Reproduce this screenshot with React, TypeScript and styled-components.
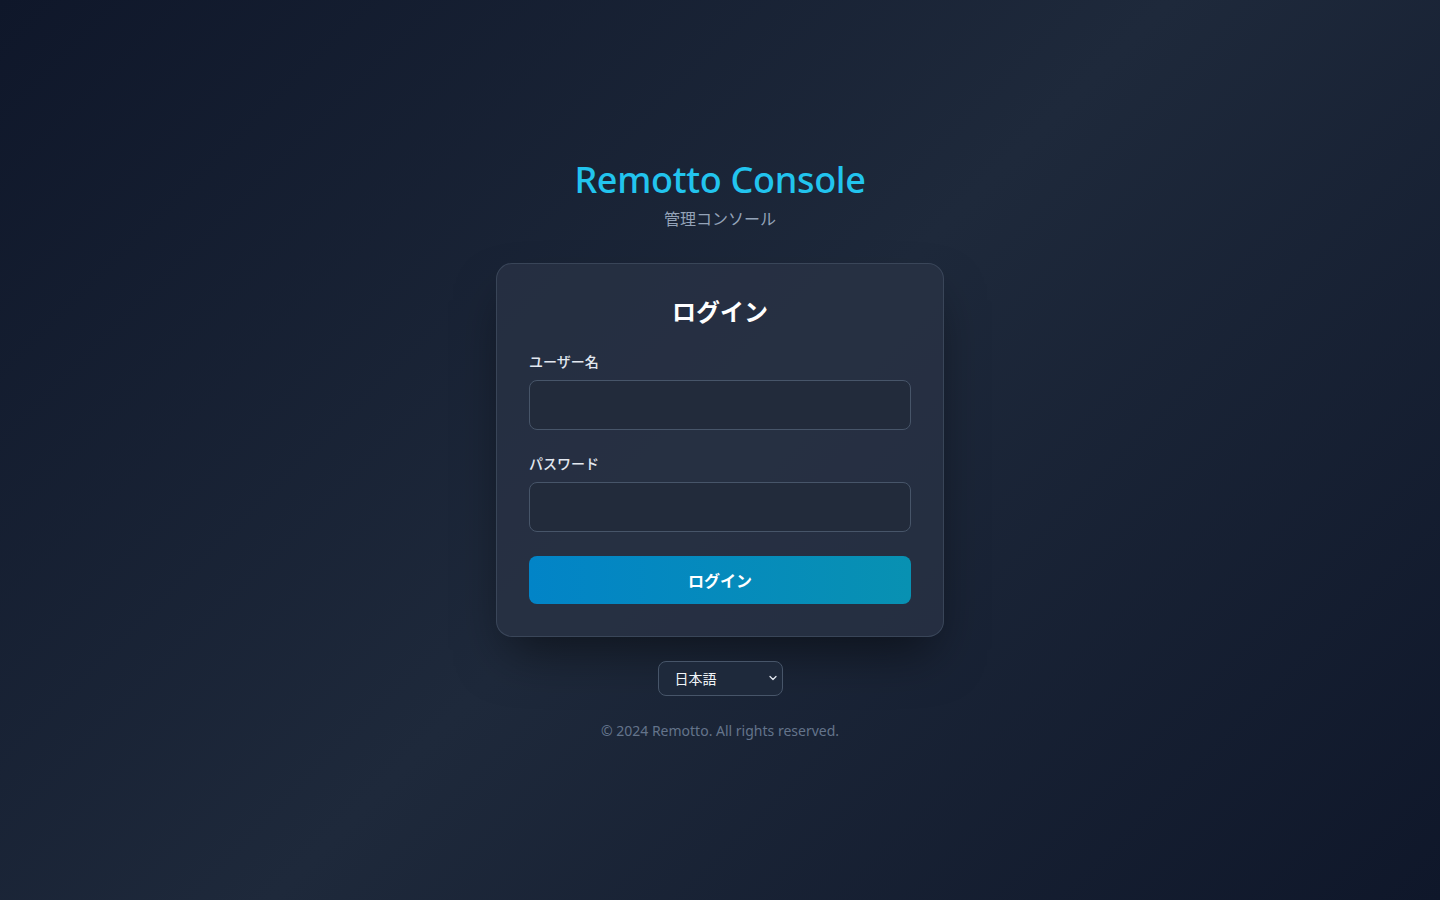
import React, { useState } from "react"
import styled, { createGlobalStyle } from "styled-components"
import { ChevronDown } from "lucide-react"

const GlobalStyle = createGlobalStyle`
  * {
    box-sizing: border-box;
  }
  body {
    margin: 0;
    font-family: "Noto Sans", "Noto Sans CJK JP", sans-serif;
    color: #f1f5f9;
  }
`

const Page = styled.div`
  min-height: 100vh;
  display: flex;
  flex-direction: column;
  align-items: center;
  justify-content: center;
  background: linear-gradient(135deg, #0f172a 0%, #1e293b 50%, #0f172a 100%);
  padding: 16px;
`

const Header = styled.header`
  display: flex;
  flex-direction: column;
  align-items: center;
  margin-bottom: 32px;
`

const Brand = styled.h1`
  margin: 0;
  font-size: 36px;
  line-height: 40px;
  font-weight: 500;
  color: #22c4ee;
  letter-spacing: -0.3px;
`

const Subtitle = styled.p`
  margin: 7px 0 0;
  font-size: 16px;
  line-height: 24px;
  color: #94a3b8;
`

const Card = styled.form`
  width: 448px;
  padding: 32px;
  border-radius: 16px;
  border: 1px solid rgba(71, 85, 105, 0.6);
  background: rgba(41, 51, 69, 0.75);
  box-shadow: 0 25px 50px -12px rgba(0, 0, 0, 0.5);
  display: flex;
  flex-direction: column;
`

const CardTitle = styled.h2`
  margin: 0 0 24px;
  text-align: center;
  font-size: 24px;
  line-height: 32px;
  font-weight: 700;
  color: #ffffff;
`

const Field = styled.div`
  display: flex;
  flex-direction: column;
  margin-bottom: 24px;
`

const Label = styled.label`
  font-size: 14px;
  line-height: 20px;
  font-weight: 500;
  color: #e2e8f0;
  margin-bottom: 8px;
`

const Input = styled.input`
  height: 50px;
  border-radius: 8px;
  border: 1px solid #475569;
  background: #222b3b;
  color: #f1f5f9;
  font: inherit;
  font-size: 16px;
  padding: 0 16px;
  outline: none;
`

const SubmitButton = styled.button`
  height: 48px;
  border: none;
  border-radius: 8px;
  background: linear-gradient(90deg, #0284c7 0%, #0891b2 100%);
  color: #ffffff;
  font: inherit;
  font-size: 16px;
  font-weight: 700;
  cursor: pointer;
`

const LangWrap = styled.div`
  position: relative;
  margin-top: 24px;
  width: 125px;
`

const LangSelect = styled.select`
  appearance: none;
  width: 100%;
  height: 35px;
  border-radius: 8px;
  border: 1px solid #475569;
  background: #1e293b;
  color: #f1f5f9;
  font: inherit;
  font-size: 14px;
  padding: 0 16px;
  outline: none;
`

const Chevron = styled(ChevronDown)`
  position: absolute;
  right: 4px;
  top: 50%;
  transform: translateY(-50%);
  color: #e2e8f0;
  pointer-events: none;
`

const Footer = styled.p`
  margin: 25px 0 0;
  font-size: 14px;
  line-height: 20px;
  color: #64748b;
`

const App = () => {
  const [lang, setLang] = useState("ja")

  return (
    <>
      <GlobalStyle />
      <Page>
        <Header>
          <Brand>Remotto Console</Brand>
          <Subtitle>管理コンソール</Subtitle>
        </Header>
        <Card onSubmit={(e) => e.preventDefault()}>
          <CardTitle>ログイン</CardTitle>
          <Field>
            <Label htmlFor="username">ユーザー名</Label>
            <Input id="username" type="text" />
          </Field>
          <Field>
            <Label htmlFor="password">パスワード</Label>
            <Input id="password" type="password" />
          </Field>
          <SubmitButton type="submit">ログイン</SubmitButton>
        </Card>
        <LangWrap>
          <LangSelect value={lang} onChange={(e) => setLang(e.target.value)}>
            <option value="ja">日本語</option>
            <option value="en">English</option>
          </LangSelect>
          <Chevron size={12} strokeWidth={2.5} />
        </LangWrap>
        <Footer>© 2024 Remotto. All rights reserved.</Footer>
      </Page>
    </>
  )
}

export default App
